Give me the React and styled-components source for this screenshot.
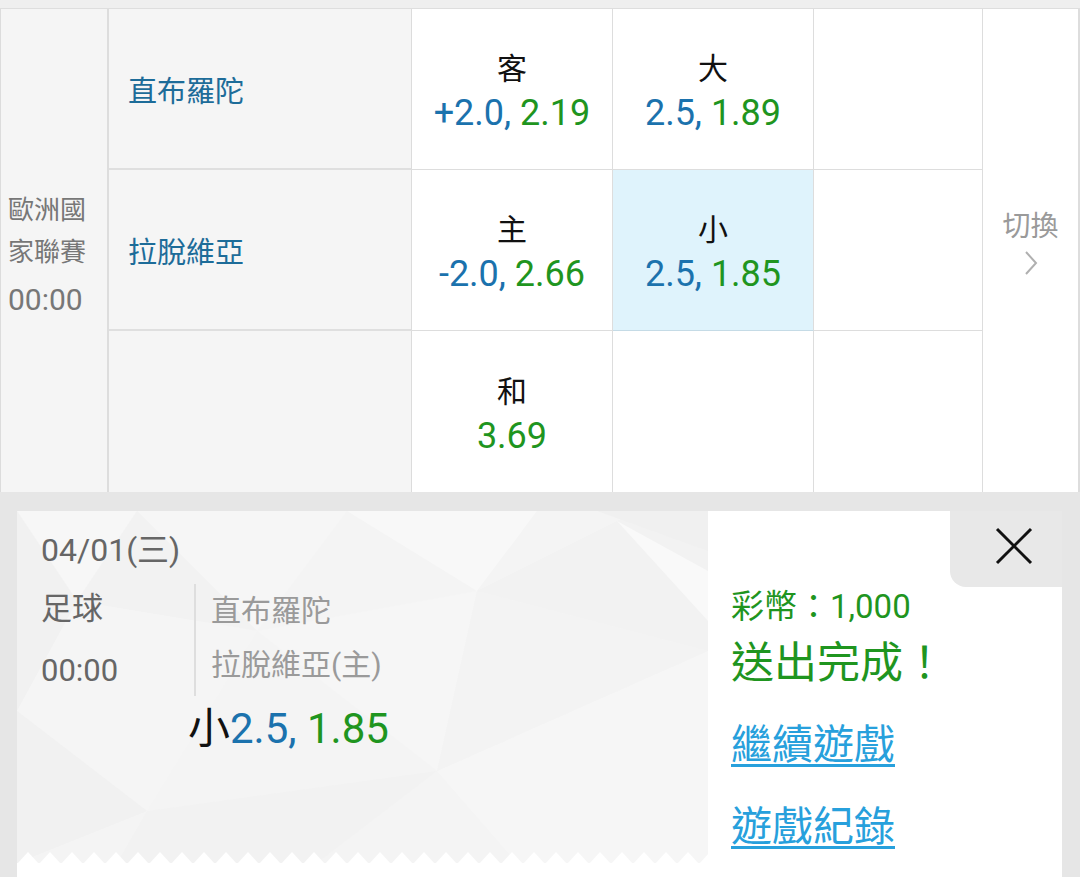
import React from "react";
import styled, { createGlobalStyle } from "styled-components";

const Global = createGlobalStyle`
  html, body { margin: 0; padding: 0; }
  body {
    background: #e6e6e6;
    font-family: Roboto, "Noto Sans CJK TC", "Noto Sans", sans-serif;
    overflow: hidden;
  }
`;

const Page = styled.div`
  width: 1080px;
  height: 877px;
  overflow: hidden;
  display: flex;
  flex-direction: column;
`;

const TopStrip = styled.div`
  height: 8px;
  background: #efefef;
  border-bottom: 1px solid #dedede;
`;

const Table = styled.div`
  display: grid;
  grid-template-columns: 108px 303px 201px 201px 169px 1fr;
  grid-template-rows: repeat(3, 161px);
  border-left: 1px solid #dcdcdc;
`;

const LeagueCell = styled.div`
  grid-row: 1 / span 3;
  grid-column: 1;
  background: #f5f5f5;
  border-right: 2px solid #dddddd;
  display: flex;
  flex-direction: column;
  justify-content: center;
  padding: 10px 0 0 7px;
  color: #777;
`;

const LeagueName = styled.div`
  font-size: 26px;
  line-height: 42px;
`;

const LeagueTime = styled.div`
  font-size: 30px;
  line-height: 46px;
  margin-top: 4px;
`;

const TeamCell = styled.div`
  background: #f5f5f5;
  border-bottom: ${(p) => (p.$last ? "none" : "2px solid #dfdfdf")};
  border-right: 1px solid #dcdcdc;
  display: flex;
  align-items: center;
  padding-left: 19px;
  font-size: 29px;
  color: #1d6c99;
`;

const OddsCell = styled.div`
  background: ${(p) => (p.$active ? "#dff3fc" : "#ffffff")};
  border-bottom: ${(p) => (p.$last ? "none" : p.$active ? "1px solid #c5dbe6" : "1px solid #dddddd")};
  border-right: 1px solid #dddddd;
  display: flex;
  flex-direction: column;
  align-items: center;
  justify-content: center;
  padding-top: 6px;
`;

const OddsLabel = styled.div`
  font-size: 30px;
  line-height: 42px;
  color: #111;
`;

const OddsValue = styled.div`
  font-size: 36px;
  line-height: 46px;
`;

const Blue = styled.span`
  color: #1b72ad;
`;

const Green = styled.span`
  color: #1f951f;
`;

const SwitchCell = styled.div`
  grid-row: 1 / span 3;
  grid-column: 6;
  background: #ffffff;
  border-right: 2px solid #dddddd;
  display: flex;
  flex-direction: column;
  align-items: center;
  justify-content: center;
  gap: 6px;
  padding-bottom: 22px;
  color: #9a9a9a;
  font-size: 28px;
`;

const Card = styled.div`
  display: flex;
  margin: 19px 18px 0 17px;
  flex: 1;
  min-height: 0;
  background: #ffffff;
`;

const LeftPanel = styled.div`
  position: relative;
  width: 691px;
  display: flex;
  flex-direction: column;
  padding: 17px 0 0 24px;
  box-sizing: border-box;
  color: #666;
`;

const Pattern = styled.svg`
  position: absolute;
  left: 0;
  top: 0;
  width: 691px;
  height: 352px;
  z-index: 0;
`;

const Content = styled.div`
  position: relative;
  z-index: 1;
  display: flex;
  flex-direction: column;
`;

const DateLine = styled.div`
  font-size: 32px;
  line-height: 44px;
`;

const InfoRow = styled.div`
  display: flex;
  margin-top: 12px;
`;

const SportCol = styled.div`
  width: 153px;
  display: flex;
  flex-direction: column;
  font-size: 31px;
`;

const SportLine = styled.div`
  line-height: 50px;
  margin-top: ${(p) => (p.$gap ? "12px" : "0")};
`;

const TeamsCol = styled.div`
  border-left: 2px solid #dedede;
  padding-left: 15px;
  display: flex;
  flex-direction: column;
  color: #9a9a9a;
  font-size: 30px;
`;

const TeamLine = styled.div`
  line-height: 54px;
`;

const PickLine = styled.div`
  margin: 8px 0 0 147px;
  font-size: 42px;
  line-height: 50px;
  color: #111;
`;

const RightPanel = styled.div`
  flex: 1;
  display: flex;
  flex-direction: column;
  background: #ffffff;
`;

const CloseRow = styled.div`
  display: flex;
  justify-content: flex-end;
`;

const CloseTab = styled.button`
  width: 112px;
  height: 76px;
  border: none;
  padding: 0 0 6px 16px;
  background: #e8e8e8;
  border-bottom-left-radius: 16px;
  display: flex;
  align-items: center;
  justify-content: center;
  cursor: pointer;
`;

const Info = styled.div`
  display: flex;
  flex-direction: column;
  padding-left: 23px;
`;

const Coins = styled.div`
  color: #1f951f;
  font-size: 33px;
  line-height: 40px;
`;

const Done = styled.div`
  color: #1f951f;
  font-size: 43px;
  line-height: 60px;
  margin-top: 6px;
`;

const Link = styled.a`
  color: #27a0dc;
  font-size: 41px;
  line-height: 56px;
  text-decoration: underline;
  text-decoration-thickness: 3px;
  text-underline-offset: 5px;
  margin-top: ${(p) => p.$mt || "0"};
  width: fit-content;
  cursor: pointer;
`;

const Zigzag = styled.svg`
  position: absolute;
  left: 0;
  top: 337px;
  width: 691px;
  height: 16px;
  z-index: 0;
`;

const BottomWhite = styled.div`
  position: absolute;
  left: 0;
  top: 352px;
  width: 691px;
  height: 40px;
  background: #fff;
`;

function Odds({ label, a, b, active, last }) {
  return (
    <OddsCell $active={active} $last={last}>
      {label && <OddsLabel>{label}</OddsLabel>}
      <OddsValue>
        {a && <Blue>{a}</Blue>}
        {b && <Green>{b}</Green>}
      </OddsValue>
    </OddsCell>
  );
}

export default function App() {
  return (
    <Page>
      <Global />
      <TopStrip />
      <Table>
        <LeagueCell>
          <LeagueName>歐洲國</LeagueName>
          <LeagueName>家聯賽</LeagueName>
          <LeagueTime>00:00</LeagueTime>
        </LeagueCell>

        <TeamCell>直布羅陀</TeamCell>
        <Odds label="客" a="+2.0, " b="2.19" />
        <Odds label="大" a="2.5, " b="1.89" />
        <OddsCell />

        <SwitchCell>
          <div>切換</div>
          <svg width="14" height="26" viewBox="0 0 14 26">
            <polyline points="2,2 12,13 2,24" fill="none" stroke="#b0b0b0" strokeWidth="2" />
          </svg>
        </SwitchCell>

        <TeamCell>拉脫維亞</TeamCell>
        <Odds label="主" a="-2.0, " b="2.66" />
        <Odds label="小" a="2.5, " b="1.85" active />
        <OddsCell />

        <TeamCell $last />
        <Odds label="和" b="3.69" last />
        <OddsCell $last />
        <OddsCell $last />
      </Table>

      <Card>
        <LeftPanel>
          <Pattern viewBox="0 0 691 352" preserveAspectRatio="none">
            <rect x="0" y="0" width="691" height="352" fill="#f4f4f4" />
            <polygon points="0,0 120,0 60,90" fill="#f7f7f7" />
            <polygon points="60,90 0,200 0,0" fill="#f1f1f1" />
            <polygon points="120,0 330,0 240,120" fill="#f6f6f6" />
            <polygon points="240,120 60,90 120,0" fill="#f2f2f2" />
            <polygon points="330,0 520,0 460,80" fill="#f8f8f8" />
            <polygon points="460,80 620,0 691,0 691,140" fill="#f2f2f2" />
            <polygon points="580,0 691,0 691,40" fill="#f0f0f0" />
            <polygon points="240,120 460,80 420,260" fill="#f6f6f6" />
            <polygon points="0,200 60,90 240,120 130,300" fill="#f5f5f5" />
            <polygon points="0,200 130,300 0,352" fill="#f1f1f1" />
            <polygon points="130,300 420,260 300,352 100,352" fill="#f2f2f2" />
            <polygon points="420,260 691,140 691,352 500,352" fill="#f6f6f6" />
            <polygon points="460,80 691,140 420,260" fill="#f3f3f3" />
            <polygon points="600,10 691,110 691,60" fill="#f9f9f9" />
          </Pattern>
          <Zigzag viewBox="0 0 691 16" preserveAspectRatio="none">
            <defs>
              <pattern id="zz" width="22" height="16" patternUnits="userSpaceOnUse">
                <polygon points="0,16 11,4 22,16" fill="#ffffff" />
              </pattern>
            </defs>
            <rect x="0" y="0" width="691" height="16" fill="url(#zz)" />
          </Zigzag>
          <BottomWhite />
          <Content>
            <DateLine>04/01(三)</DateLine>
            <InfoRow>
              <SportCol>
                <SportLine>足球</SportLine>
                <SportLine $gap>00:00</SportLine>
              </SportCol>
              <TeamsCol>
                <TeamLine>直布羅陀</TeamLine>
                <TeamLine>拉脫維亞(主)</TeamLine>
              </TeamsCol>
            </InfoRow>
            <PickLine>
              小<Blue>2.5, </Blue>
              <Green>1.85</Green>
            </PickLine>
          </Content>
        </LeftPanel>

        <RightPanel>
          <CloseRow>
            <CloseTab aria-label="close">
              <svg width="38" height="38" viewBox="0 0 38 38">
                <line x1="2" y1="2" x2="36" y2="36" stroke="#111" strokeWidth="3" />
                <line x1="36" y1="2" x2="2" y2="36" stroke="#111" strokeWidth="3" />
              </svg>
            </CloseTab>
          </CloseRow>
          <Info>
            <Coins>彩幣：1,000</Coins>
            <Done>送出完成！</Done>
            <Link $mt="24px">繼續遊戲</Link>
            <Link $mt="26px">遊戲紀錄</Link>
          </Info>
        </RightPanel>
      </Card>
    </Page>
  );
}
